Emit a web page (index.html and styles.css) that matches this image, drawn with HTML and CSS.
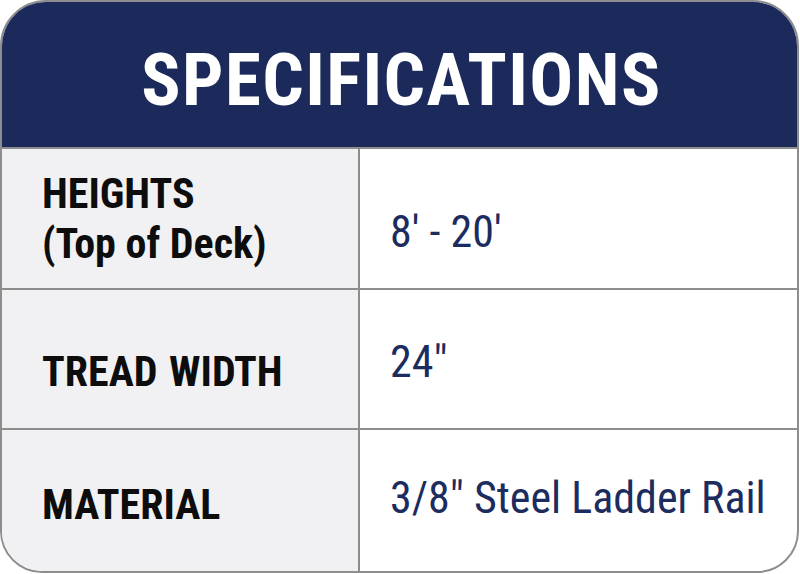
FILE: index.html
```html
<!DOCTYPE html>
<html>
<head>
<meta charset="utf-8">
<link rel="stylesheet" href="styles.css">
</head>
<body>
<div class="card">
  <div class="header"><span class="title">SPECIFICATIONS</span></div>
  <div class="row r1">
    <div class="label">HEIGHTS<br>(Top of Deck)</div>
    <div class="value v1">8′ - 20′</div>
  </div>
  <div class="row r2">
    <div class="label l2">TREAD WIDTH</div>
    <div class="value v2">24″</div>
  </div>
  <div class="row last">
    <div class="label l3">MATERIAL</div>
    <div class="value v3">3/8″ Steel Ladder Rail</div>
  </div>
</div>
</body>
</html>
```
FILE: styles.css
```css
html, body {
  margin: 0;
  padding: 0;
  background: #ffffff;
}
body {
  width: 800px;
  height: 574px;
  overflow: hidden;
  font-family: Roboto, "Liberation Sans", sans-serif;
  font-stretch: 75%;
}
.card {
  box-sizing: border-box;
  width: 799px;
  height: 573px;
  border: 2px solid #8d8d8d;
  border-radius: 46px 46px 42px 42px;
  overflow: hidden;
  display: flex;
  flex-direction: column;
  background: #ffffff;
}
.header {
  height: 145px;
  flex: none;
  background: #1b2a5b;
  border-bottom: 2px solid #8d8d8d;
  display: flex;
  align-items: center;
  justify-content: center;
}
.title {
  color: #ffffff;
  font-weight: 700;
  font-size: 73px;
  letter-spacing: 1.4px;
  line-height: 1;
  padding-top: 12px;
  padding-left: 4px;
}
.row {
  display: grid;
  grid-template-columns: 358px 1fr;
  flex: none;
  border-bottom: 2px solid #8d8d8d;
}
.r1 { height: 139px; }
.r2 { height: 138px; }
.row.last {
  border-bottom: none;
  flex: 1;
}
.label {
  background: #f1f1f3;
  border-right: 2px solid #8d8d8d;
  color: #0d0d0d;
  font-weight: 700;
  font-size: 42px;
  line-height: 50px;
  padding-left: 40px;
  display: flex;
  align-items: center;
}
.l2 { padding-top: 26px; word-spacing: 2px; }
.l3 { padding-top: 8px; }
.value {
  color: #1c2c5e;
  font-size: 44px;
  line-height: 1;
  padding-left: 30px;
  display: flex;
  align-items: center;
}
.v1 { padding-top: 26px; }
.v2 { padding-top: 6px; }
.v3 { padding-bottom: 6px; }
```
